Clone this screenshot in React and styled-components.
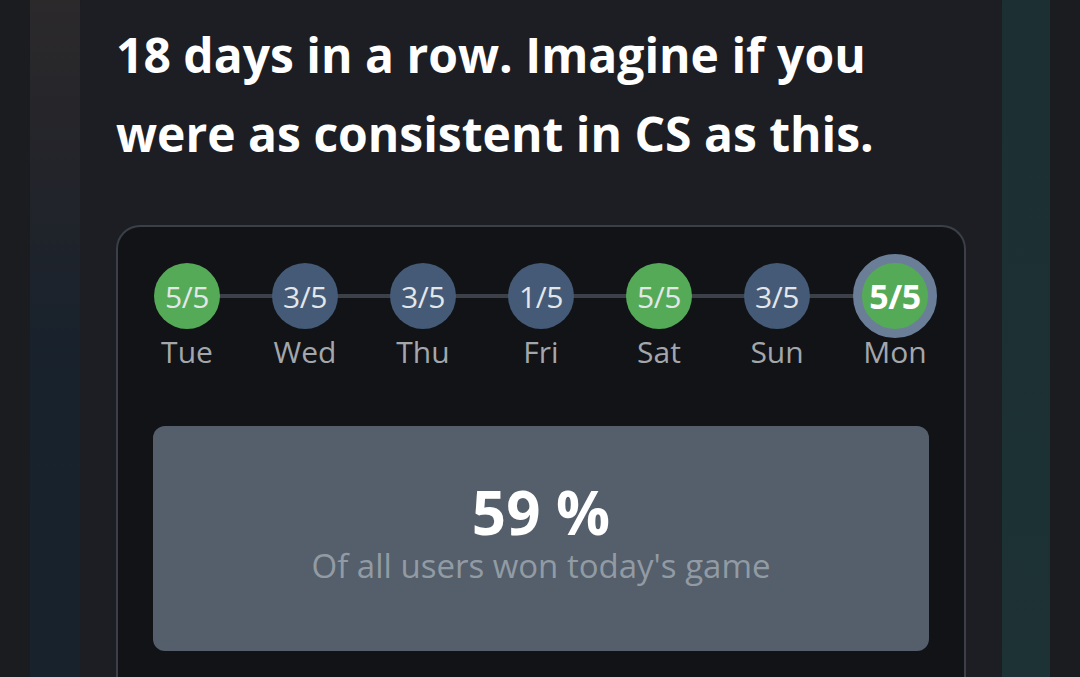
import styled, { createGlobalStyle } from "styled-components"

const GlobalStyle = createGlobalStyle`
    html, body {
        margin: 0;
        padding: 0;
        background: #1b1c20;
        height: 677px;
        overflow: hidden;
    }
    body {
        font-family: "Open Sans", "Noto Sans", sans-serif;
    }
`

const Pagina = styled.div`
    display: flex;
    align-items: stretch;
    height: 677px;
    padding-left: 30px;
    box-sizing: border-box;
`

const Vizinho = styled.div`
    width: ${(props) => props.$largura}px;
    flex-shrink: 0;
    background: ${(props) => props.$fundo};
`

const Cartao = styled.section`
    width: 922px;
    flex-shrink: 0;
    margin-top: -20px;
    padding: 35px 36px 0;
    box-sizing: border-box;
    background: #1c1e23;
    border-radius: 26px 26px 0 0;
`

const Titulo = styled.h1`
    margin: 0;
    font-size: 48px;
    line-height: 79px;
    font-weight: 700;
    color: #ffffff;
`

const CaixaSemana = styled.div`
    margin-top: 52px;
    border: 2px solid #3b4048;
    border-bottom: none;
    border-radius: 24px 24px 0 0;
    background: #111317;
    padding: 27px 0 0;
    height: 600px;
    box-sizing: border-box;
`

const LinhaDias = styled.div`
    display: grid;
    grid-template-columns: repeat(7, 118px);
    justify-content: center;
`

const Dia = styled.div`
    position: relative;
    display: flex;
    flex-direction: column;
    align-items: center;

    &:not(:last-child)::after {
        content: "";
        position: absolute;
        top: 40px;
        left: 59px;
        width: 118px;
        height: 4px;
        background: #3c4149;
        z-index: 0;
    }
`

const Encaixe = styled.div`
    height: 84px;
    display: flex;
    align-items: center;
    justify-content: center;
    position: relative;
    z-index: 1;
`

const Bolinha = styled.div`
    width: 66px;
    height: 66px;
    border-radius: 50%;
    display: flex;
    align-items: center;
    justify-content: center;
    box-sizing: content-box;
    background: ${(props) => (props.$ganhou ? "#55aa57" : "#445a76")};
    color: ${(props) => (props.$hoje ? "#ffffff" : "#e3e7ea")};
    font-size: ${(props) => (props.$hoje ? "34px" : "30px")};
    font-weight: ${(props) => (props.$hoje ? 700 : 400)};
    border: ${(props) => (props.$hoje ? "9px solid #6a7e98" : "none")};
    letter-spacing: -0.5px;
`

const NomeDia = styled.span`
    margin-top: -3px;
    font-size: 30px;
    line-height: 34px;
    color: #a3a7ac;
`

const Estatistica = styled.div`
    margin: 57px 35px 0;
    height: 225px;
    border-radius: 12px;
    background: #545f6b;
    display: flex;
    flex-direction: column;
    align-items: center;
    justify-content: center;
    padding-bottom: 12px;
    box-sizing: border-box;
`

const Porcentagem = styled.div`
    font-size: 60px;
    line-height: 64px;
    font-weight: 700;
    color: #ffffff;
`

const Legenda = styled.div`
    margin-top: 2px;
    font-size: 33px;
    line-height: 40px;
    color: #929ba4;
`

const dias = [
    { nome: "Tue", placar: "5/5", ganhou: true },
    { nome: "Wed", placar: "3/5", ganhou: false },
    { nome: "Thu", placar: "3/5", ganhou: false },
    { nome: "Fri", placar: "1/5", ganhou: false },
    { nome: "Sat", placar: "5/5", ganhou: true },
    { nome: "Sun", placar: "3/5", ganhou: false },
    { nome: "Mon", placar: "5/5", ganhou: true, hoje: true },
]

const App = () => {
    return (
        <>
            <GlobalStyle />
            <Pagina>
                <Vizinho
                    $largura={50}
                    $fundo="linear-gradient(180deg, #2b292a 0%, #23242a 25%, #19222c 50%, #17222d 100%)"
                />
                <Cartao>
                    <Titulo>
                        18 days in a row. Imagine if you
                        <br />
                        were as consistent in CS as this.
                    </Titulo>
                    <CaixaSemana>
                        <LinhaDias>
                            {dias.map((dia) => (
                                <Dia key={dia.nome}>
                                    <Encaixe>
                                        <Bolinha $ganhou={dia.ganhou} $hoje={dia.hoje}>
                                            {dia.placar}
                                        </Bolinha>
                                    </Encaixe>
                                    <NomeDia>{dia.nome}</NomeDia>
                                </Dia>
                            ))}
                        </LinhaDias>
                        <Estatistica>
                            <Porcentagem>59 %</Porcentagem>
                            <Legenda>Of all users won today's game</Legenda>
                        </Estatistica>
                    </CaixaSemana>
                </Cartao>
                <Vizinho $largura={48} $fundo="linear-gradient(180deg, #1c2f33 0%, #1d3235 100%)" />
            </Pagina>
        </>
    )
}

export default App
